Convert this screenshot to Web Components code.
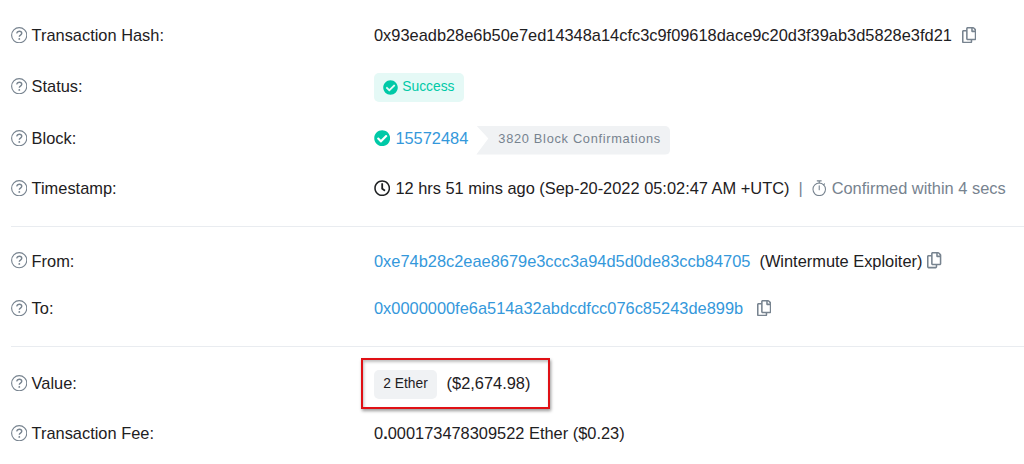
<!DOCTYPE html>
<html lang="en">
<head>
<meta charset="utf-8">
<title>Transaction Details</title>
<style>
  body {
    margin: 0;
    background: #fff;
    color: #1e2022;
    font: 16.4px/24px "Liberation Sans", Arial, sans-serif;
  }
</style>
</head>
<body>
<tx-details>
  <tx-section>
    <tx-row label="Transaction Hash:" style="--h: 50px">
      <span>0x93eadb28e6b50e7ed14348a14cfc3c9f09618dace9c20d3f39ab3d5828e3fd21</span>
      <tx-icon name="copy" style="margin-left: 10px"></tx-icon>
    </tx-row>
    <tx-row label="Status:" style="--h: 52px">
      <tx-badge kind="success"><tx-icon name="check" style="--size: 15px; margin-right: 4px"></tx-icon>Success</tx-badge>
    </tx-row>
    <tx-row label="Block:" style="--h: 52px">
      <tx-icon name="check" style="margin-right: 5px"></tx-icon>
      <tx-link>15572484</tx-link>
      <tx-ribbon style="margin-left: 8px">3820 Block Confirmations</tx-ribbon>
    </tx-row>
    <tx-row label="Timestamp:" style="--h: 48px">
      <tx-icon name="clock" style="margin-right: 5px"></tx-icon>
      <span>12 hrs 51 mins ago (Sep-20-2022 05:02:47 AM +UTC)</span>
      <tx-muted style="margin-left: 9px">|</tx-muted>
      <tx-icon name="stopwatch" style="margin: 0 5px 0 9.5px"></tx-icon>
      <tx-muted>Confirmed within 4 secs</tx-muted>
    </tx-row>
  </tx-section>
  <tx-section>
    <tx-row label="From:" style="--h: 47px">
      <tx-link>0xe74b28c2eae8679e3ccc3a94d5d0de83ccb84705</tx-link>
      <span style="margin-left: 9px">(Wintermute Exploiter)</span>
      <tx-icon name="copy" style="margin-left: 5px"></tx-icon>
    </tx-row>
    <tx-row label="To:" style="--h: 48px">
      <tx-link>0x0000000fe6a514a32abdcdfcc076c85243de899b</tx-link>
      <tx-icon name="copy" style="margin-left: 14px"></tx-icon>
    </tx-row>
  </tx-section>
  <tx-section>
    <tx-row label="Value:" style="--h: 50px">
      <tx-highlight>
        <tx-badge>2 Ether</tx-badge>
        <span style="margin-left: 9.5px">($2,674.98)</span>
      </tx-highlight>
    </tx-row>
    <tx-row label="Transaction Fee:" style="--h: 50px">
      <span>0<b>.</b>000173478309522 Ether ($0.23)</span>
    </tx-row>
  </tx-section>
</tx-details>

<script>
const icons = {
  help: {
    box: "0 0 16 16",
    body: `<g fill="none" stroke="currentColor"><circle cx="8" cy="8" r="7.4" stroke-width="1.1"/>
      <path stroke-width="1.35" d="M5.5 6.2C5.8 4.8 6.8 4.2 8 4.2c1.5 0 2.5.8 2.5 2 0 1.7-2.4 1.7-2.4 3.3"/></g>
      <circle cx="8.1" cy="11.6" r=".9"/>`,
  },
  copy: {
    box: "0 0 448 512",
    body: `<path d="M433.941 65.941l-51.882-51.882A48 48 0 0 0 348.118 0H176c-26.51 0-48 21.49-48 48v48H48c-26.51 0-48 21.49-48 48v320c0 26.51 21.49 48 48 48h224c26.51 0 48-21.49 48-48v-48h80c26.51 0 48-21.49 48-48V99.882a48 48 0 0 0-14.059-33.941zM266 464H54a6 6 0 0 1-6-6V150a6 6 0 0 1 6-6h74v224c0 26.51 21.49 48 48 48h96v42a6 6 0 0 1-6 6zm128-96H182a6 6 0 0 1-6-6V54a6 6 0 0 1 6-6h106v88c0 13.255 10.745 24 24 24h88v202a6 6 0 0 1-6 6zm6-256h-64V48h9.632c1.591 0 3.117.632 4.243 1.757l48.368 48.368a6 6 0 0 1 1.757 4.243V112z"/>`,
  },
  check: {
    box: "0 0 512 512",
    body: `<path d="M504 256c0 136.967-111.033 248-248 248S8 392.967 8 256 119.033 8 256 8s248 111.033 248 248zM227.314 387.314l184-184c6.248-6.248 6.248-16.379 0-22.627l-22.627-22.627c-6.248-6.248-16.379-6.249-22.628 0L216 308.118l-70.059-70.059c-6.248-6.248-16.379-6.248-22.628 0l-22.627 22.627c-6.248 6.248-6.248 16.379 0 22.627l104 104c6.249 6.249 16.379 6.249 22.628.001z"/>`,
  },
  clock: {
    box: "0 0 512 512",
    body: `<path d="M256 8C119 8 8 119 8 256s111 248 248 248 248-111 248-248S393 8 256 8zm0 448c-110.5 0-200-89.5-200-200S145.5 56 256 56s200 89.5 200 200-89.5 200-200 200zm61.8-104.4l-84.9-61.7c-3.1-2.3-4.9-5.9-4.9-9.7V116c0-6.6 5.4-12 12-12h32c6.6 0 12 5.4 12 12v141.7l66.8 48.6c5.4 3.9 6.5 11.4 2.6 16.8L334.6 349c-3.9 5.3-11.4 6.5-16.8 2.6z"/>`,
  },
  stopwatch: {
    box: "0 0 15 17",
    body: `<g fill="none" stroke="currentColor" stroke-width="1.1" stroke-linecap="round">
      <circle cx="7.5" cy="9.7" r="6.5"/><path d="M5.4.9h4.2M7.5.9v2.3M12 5l1-1M7.5 6v4.2"/></g>`,
  },
};

class TxIcon extends HTMLElement {
  connectedCallback() {
    const icon = icons[this.getAttribute("name")];
    this.attachShadow({ mode: "open" }).innerHTML = `
      <style>
        :host { display: inline-flex; flex: none; color: #77838f; }
        :host([name="check"]) { color: #00c9a7; }
        :host([name="clock"]) { color: #1e2022; }
        svg { display: block; height: var(--size, 16.4px); fill: currentColor; }
      </style>
      <svg viewBox="${icon.box}">${icon.body}</svg>`;
  }
}

class TxRow extends HTMLElement {
  connectedCallback() {
    this.attachShadow({ mode: "open" }).innerHTML = `
      <style>
        :host {
          display: grid;
          grid-template-columns: 363px 1fr;
          align-items: center;
          height: var(--h);
          white-space: nowrap;
        }
        div { display: flex; align-items: center; }
        .label { gap: 4.2px; }
      </style>
      <div class="label"><tx-icon name="help"></tx-icon><span>${this.getAttribute("label")}</span></div>
      <div><slot></slot></div>`;
  }
}

// Elements that only wrap their slot in a styled box
const define = (name, css) => {
  customElements.define(name, class extends HTMLElement {
    connectedCallback() {
      this.attachShadow({ mode: "open" }).innerHTML = `<style>${css}</style><slot></slot>`;
    }
  });
};

define("tx-details", `
  :host { display: block; padding: 10px 0 0 11px; }
`);

define("tx-section", `
  :host { display: block; padding-bottom: 14px; }
  :host(:not(:last-child)) { border-bottom: 1px solid #e9ecf0; margin-bottom: 10px; }
  :host(:last-child) { padding: 1px 0 0; }
`);

define("tx-link", `
  :host { color: #3498db; }
`);

define("tx-muted", `
  :host { color: #77838f; }
`);

define("tx-badge", `
  :host {
    display: inline-flex;
    align-items: center;
    box-sizing: border-box;
    height: 29px;
    padding: 0 9.3px 2px;
    margin-top: 3px;
    border-radius: 5px;
    background: #f0f2f4;
    font-size: 13.8px;
  }
  :host([kind="success"]) { padding-bottom: 1px; background: #e5f9f6; color: #00c9a7; }
`);

define("tx-ribbon", `
  :host {
    display: inline-flex;
    align-items: center;
    box-sizing: border-box;
    height: 29px;
    padding: 0 9.5px 2px 22px;
    margin-top: 4px;
    border-radius: 0 5px 5px 0;
    background: #f0f2f4;
    clip-path: polygon(0 0, 100% 0, 100% 100%, 0 100%, 12px 45%);
    color: #77838f;
    font-size: 12.8px;
    letter-spacing: .7px;
  }
`);

define("tx-highlight", `
  :host { display: flex; align-items: center; position: relative; }
  :host::after {
    content: "";
    position: absolute;
    inset: -9px -20px -10px -13px;
    border: 2px solid #e01015;
    box-shadow: 1px 2px 3px rgba(0, 0, 0, .4), inset 1px 2px 3px rgba(0, 0, 0, .25);
  }
`);

customElements.define("tx-icon", TxIcon);
customElements.define("tx-row", TxRow);
</script>
</body>
</html>
